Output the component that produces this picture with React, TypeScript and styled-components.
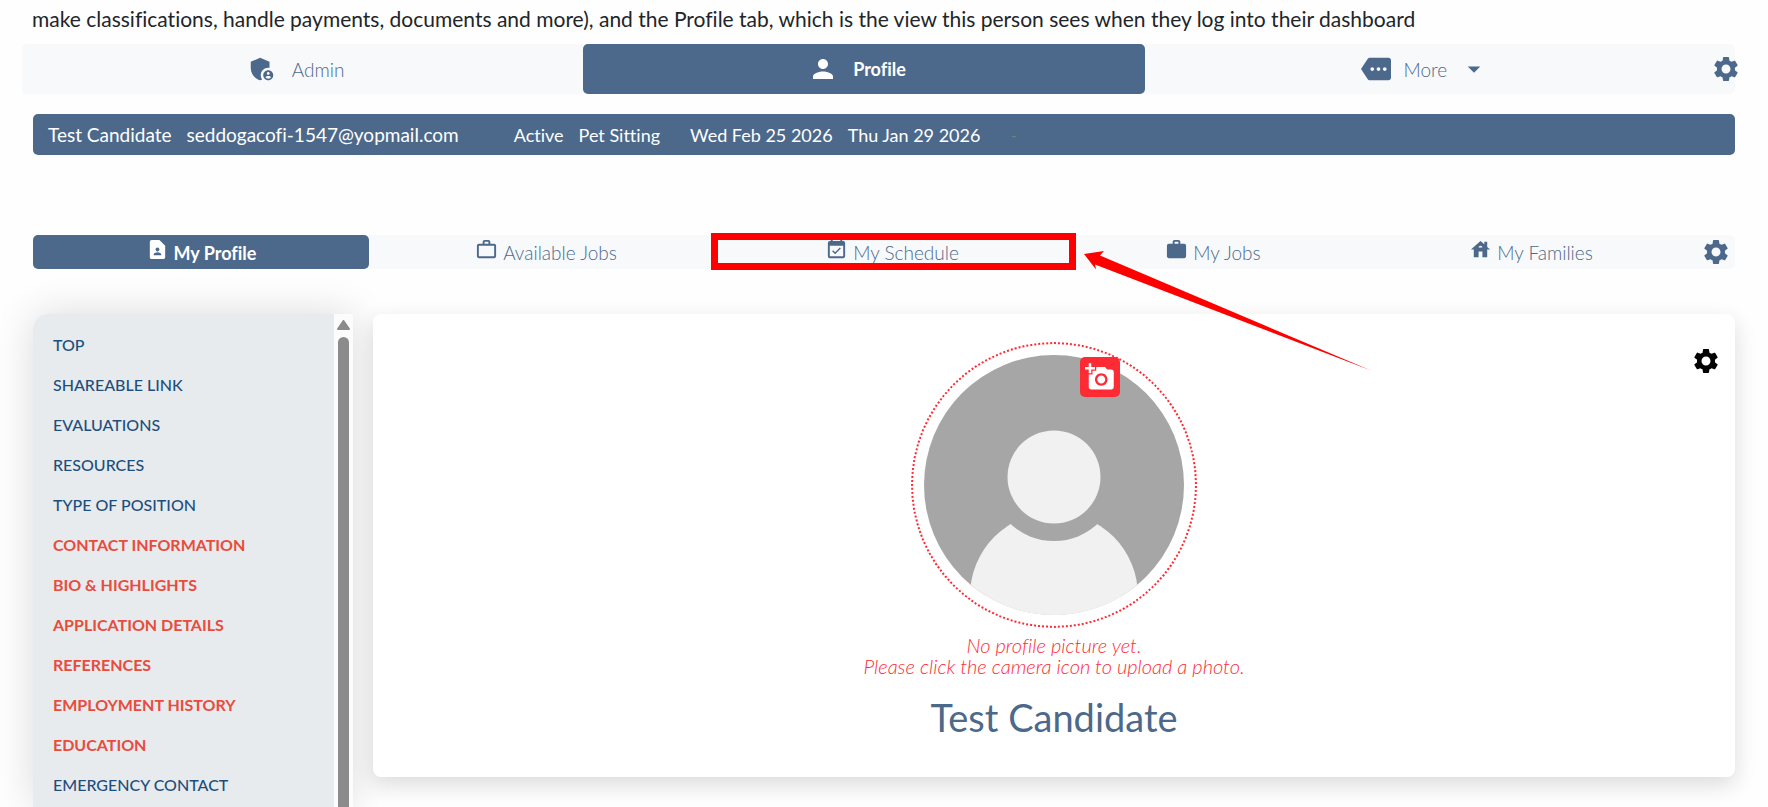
import React from 'react';
import styled, { createGlobalStyle, css } from 'styled-components';
import {
  MdAddAPhoto,
  MdAdminPanelSettings,
  MdArrowDropDown,
  MdContactPage,
  MdEventAvailable,
  MdHouse,
  MdMore,
  MdPerson,
  MdSettings,
  MdWork,
  MdWorkOutline,
} from 'react-icons/md';

const color = {
  blue: '#4c698b',
  pale: '#f8f9fb',
  navy: '#1d4f7c',
  alert: '#e74c3c',
  red: '#fe2b35',
  mark: '#ff0000',
};

const GlobalStyle = createGlobalStyle`
  *, *::before, *::after { box-sizing: border-box; }
  body {
    margin: 0;
    background: #fefefe;
    color: #212529;
    font-family: Lato, "Liberation Sans", sans-serif;
    font-variant-ligatures: none;
  }
  button { font: inherit; color: inherit; border: 0; background: none; padding: 0; cursor: pointer; }
  svg { display: block; flex: none; }
`;

const Page = styled.div`
  display: flex;
  flex-direction: column;
  height: 100vh;
  overflow: hidden;
  padding: 0 33px 0 22px;
`;

const Intro = styled.p`
  margin: 0 0 6px;
  padding-left: 10px;
  font-size: 21px;
  line-height: 38px;
`;

const TopTabs = styled.nav`
  display: grid;
  flex: none;
  grid-template-columns: repeat(3, 1fr) 29px;
  height: 50px;
  border-radius: 5px;
  background: ${color.pale};
  color: ${color.blue};
`;

const activeTab = css`
  background: ${color.blue};
  color: #fff;
  font-weight: 700;
  font-size: 18px;
`;

const TopTab = styled.button<{ $active?: boolean; $menu?: boolean }>`
  display: flex;
  align-items: center;
  justify-content: center;
  gap: ${(p) => (p.$menu ? 12 : 15)}px;
  padding-right: ${(p) => (p.$menu ? 0 : 14)}px;
  border-radius: 5px;
  font-weight: 300;
  font-size: 19px;
  ${(p) => p.$active && activeTab}
`;

const TopSettings = styled.button`
  display: flex;
  align-items: center;
  justify-content: flex-end;
  margin-right: -6px;
`;

const Content = styled.main`
  display: flex;
  flex: 1;
  flex-direction: column;
  min-height: 0;
  padding: 20px 0 0 11px;
`;

const Summary = styled.section`
  display: flex;
  flex: none;
  align-items: baseline;
  height: 41px;
  padding: 0 15px;
  border-radius: 5px;
  background: ${color.blue};
  color: #fff;
  font-size: 18px;
  line-height: 41px;
  white-space: nowrap;
`;

const SummaryItem = styled.span<{ $gap?: number; $lead?: boolean }>`
  margin-right: ${(p) => p.$gap ?? 15}px;
  font-size: ${(p) => (p.$lead ? 19 : 18)}px;
`;

const Faint = styled.span`
  color: #6b7f86;
`;

const SubTabs = styled.nav`
  display: grid;
  flex: none;
  grid-template-columns: 336fr 354fr 338fr 304fr 332fr 38px;
  height: 34px;
  margin-top: 80px;
  border-radius: 5px;
  background: ${color.pale};
  color: ${color.blue};
`;

const SubTab = styled.button<{ $active?: boolean }>`
  position: relative;
  display: flex;
  align-items: flex-start;
  justify-content: center;
  gap: 5px;
  padding-top: 3px;
  border-radius: 5px;
  font-weight: 300;
  font-size: 19px;
  line-height: 30px;
  ${(p) => p.$active && activeTab}
`;

const SubSettings = styled.button`
  display: flex;
  align-items: center;
  justify-content: center;
`;

const Highlight = styled.span`
  position: absolute;
  inset: -2px -15px -1px -12px;
  border: 7px solid ${color.mark};
`;

const Arrow = styled.svg`
  position: absolute;
  z-index: 2;
  top: 15px;
  left: calc(100% + 23px);
`;

const Columns = styled.div`
  display: grid;
  flex: 1;
  grid-template-columns: 320px 1fr;
  gap: 20px;
  min-height: 0;
  margin-top: 45px;
`;

const Sidebar = styled.aside`
  display: flex;
  overflow: hidden;
  border-radius: 15px 0 0 0;
  box-shadow: 0 0 40px rgba(0, 0, 0, 0.14);
`;

const Sections = styled.nav`
  display: flex;
  flex: 1;
  flex-direction: column;
  padding: 11px 20px 0;
  background: #e8ebee;
`;

const SectionLink = styled.a<{ $missing?: boolean }>`
  color: ${(p) => (p.$missing ? color.alert : color.navy)};
  font-weight: ${(p) => (p.$missing ? 700 : 500)};
  font-size: 16px;
  line-height: 40px;
  text-decoration: none;
`;

const Track = styled.div`
  display: flex;
  flex: 0 0 19px;
  flex-direction: column;
  align-items: center;
  gap: 7px;
  padding-top: 6px;
  background: #fcfcfc;
`;

const Thumb = styled.div`
  flex: 1;
  width: 11px;
  border-radius: 6px 6px 0 0;
  background: #8b8b8b;
`;

const Card = styled.section`
  position: relative;
  display: flex;
  flex-direction: column;
  align-items: center;
  align-self: start;
  padding: 28px 0 36px;
  border-radius: 8px;
  background: #fff;
  box-shadow: 0 8px 22px rgba(0, 0, 0, 0.14);
`;

const CardSettings = styled.button`
  position: absolute;
  top: 32px;
  right: 14px;
  color: #000;
`;

const AvatarRing = styled.div`
  position: relative;
  padding: 11px;
  border: 2px dotted ${color.red};
  border-radius: 50%;
`;

const CameraButton = styled.button`
  position: absolute;
  top: 13px;
  right: 75px;
  display: flex;
  align-items: center;
  justify-content: center;
  width: 40px;
  height: 40px;
  border-radius: 5px;
  background: ${color.red};
  color: #fff;
`;

const Hint = styled.p`
  margin: 7px 0 0;
  color: ${color.red};
  font-style: italic;
  font-weight: 300;
  font-size: 20px;
  line-height: 21px;
  text-align: center;
`;

const Name = styled.h1`
  margin: 16px 0 0;
  color: ${color.blue};
  font-weight: 400;
  font-size: 38px;
  line-height: 48px;
`;

const sections: { label: string; missing?: boolean }[] = [
  { label: 'TOP' },
  { label: 'SHAREABLE LINK' },
  { label: 'EVALUATIONS' },
  { label: 'RESOURCES' },
  { label: 'TYPE OF POSITION' },
  { label: 'CONTACT INFORMATION', missing: true },
  { label: 'BIO & HIGHLIGHTS', missing: true },
  { label: 'APPLICATION DETAILS', missing: true },
  { label: 'REFERENCES', missing: true },
  { label: 'EMPLOYMENT HISTORY', missing: true },
  { label: 'EDUCATION', missing: true },
  { label: 'EMERGENCY CONTACT' },
];

const Avatar = () => (
  <svg width="260" height="260" viewBox="0 0 260 260" aria-hidden="true">
    <clipPath id="avatar-round">
      <circle cx="130" cy="130" r="130" />
    </clipPath>
    <g clipPath="url(#avatar-round)">
      <rect width="260" height="260" fill="#a6a6a6" />
      <circle cx="130" cy="241" r="84" fill="#f1f1f1" />
      <rect x="46" y="241" width="168" height="20" fill="#f1f1f1" />
      <circle cx="130" cy="122" r="64" fill="#a6a6a6" />
      <circle cx="130" cy="122" r="46.5" fill="#f1f1f1" />
    </g>
  </svg>
);

export default function App() {
  return (
    <>
      <GlobalStyle />
      <Page>
        <Intro>
          make classifications, handle payments, documents and more), and the Profile tab, which is
          the view this person sees when they log into their dashboard
        </Intro>

        <TopTabs>
          <TopTab>
            <MdAdminPanelSettings size={30} />
            Admin
          </TopTab>
          <TopTab $active>
            <MdPerson size={30} />
            Profile
          </TopTab>
          <TopTab $menu>
            <MdMore size={30} />
            More
            <MdArrowDropDown size={30} />
          </TopTab>
          <TopSettings aria-label="Tab settings">
            <MdSettings size={30} />
          </TopSettings>
        </TopTabs>

        <Content>
          <Summary>
            <SummaryItem $lead>Test Candidate</SummaryItem>
            <SummaryItem $lead $gap={55}>
              seddogacofi-1547@yopmail.com
            </SummaryItem>
            <SummaryItem>Active</SummaryItem>
            <SummaryItem $gap={30}>Pet Sitting</SummaryItem>
            <SummaryItem>Wed Feb 25 2026</SummaryItem>
            <SummaryItem $gap={30}>Thu Jan 29 2026</SummaryItem>
            <Faint>-</Faint>
          </Summary>

          <SubTabs>
            <SubTab $active>
              <MdContactPage size={23} />
              My Profile
            </SubTab>
            <SubTab>
              <MdWorkOutline size={23} />
              Available Jobs
            </SubTab>
            <SubTab>
              <MdEventAvailable size={23} />
              My Schedule
              <Highlight />
              <Arrow width="287" height="121" viewBox="0 0 287 121" aria-hidden="true">
                <path d="M0 4 L20 1 L16 5.5 L287 120.5 L11 14.5 L12 19.5 Z" fill={color.mark} />
              </Arrow>
            </SubTab>
            <SubTab>
              <MdWork size={23} />
              My Jobs
            </SubTab>
            <SubTab>
              <MdHouse size={23} />
              My Families
            </SubTab>
            <SubSettings aria-label="Profile tab settings">
              <MdSettings size={30} />
            </SubSettings>
          </SubTabs>

          <Columns>
            <Sidebar>
              <Sections>
                {sections.map((s) => (
                  <SectionLink key={s.label} href="#" $missing={s.missing}>
                    {s.label}
                  </SectionLink>
                ))}
              </Sections>
              <Track>
                <svg width="13" height="10" viewBox="0 0 13 10" aria-hidden="true">
                  <path
                    d="M6.5 1 L12 9 H1 Z"
                    fill="#8b8b8b"
                    stroke="#8b8b8b"
                    strokeWidth="2"
                    strokeLinejoin="round"
                  />
                </svg>
                <Thumb />
              </Track>
            </Sidebar>

            <Card>
              <CardSettings aria-label="Card settings">
                <MdSettings size={30} />
              </CardSettings>
              <AvatarRing>
                <Avatar />
                <CameraButton aria-label="Upload a photo">
                  <MdAddAPhoto size={30} />
                </CameraButton>
              </AvatarRing>
              <Hint>
                No profile picture yet.
                <br />
                Please click the camera icon to upload a photo.
              </Hint>
              <Name>Test Candidate</Name>
            </Card>
          </Columns>
        </Content>
      </Page>
    </>
  );
}
